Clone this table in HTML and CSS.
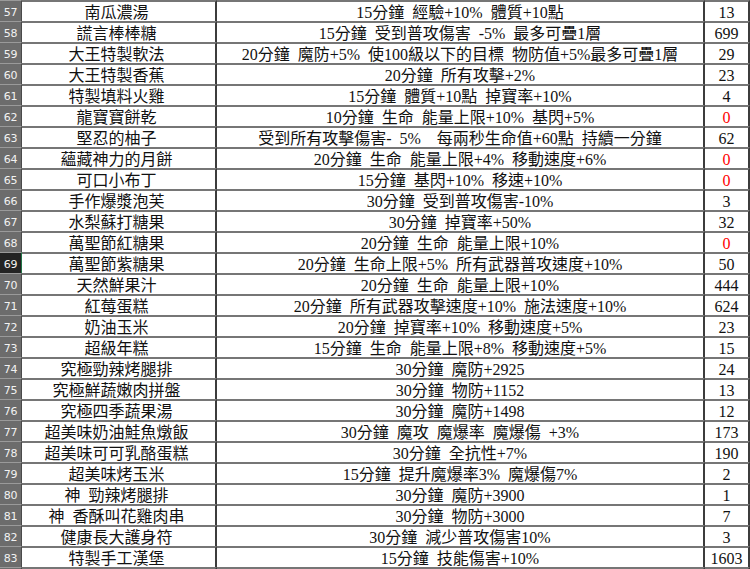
FILE: index.html
```html
<!DOCTYPE html>
<html lang="zh-Hant">
<head>
<meta charset="utf-8">
<title>料理清單</title>
<link rel="stylesheet" href="styles.css">
</head>
<body>
<div class="sheet">
  <div class="row"><div class="hd">57</div><div class="c name">南瓜濃湯</div><div class="c desc">15分鐘 經驗+10% 體質+10點</div><div class="c num">13</div></div>
  <div class="row"><div class="hd">58</div><div class="c name">謊言棒棒糖</div><div class="c desc">15分鐘 受到普攻傷害 -5% 最多可疊1層</div><div class="c num">699</div></div>
  <div class="row"><div class="hd">59</div><div class="c name">大王特製軟法</div><div class="c desc">20分鐘 魔防+5% 使100級以下的目標 物防值+5%最多可疊1層</div><div class="c num">29</div></div>
  <div class="row"><div class="hd">60</div><div class="c name">大王特製香蕉</div><div class="c desc">20分鐘 所有攻擊+2%</div><div class="c num">23</div></div>
  <div class="row"><div class="hd">61</div><div class="c name">特製填料火雞</div><div class="c desc">15分鐘 體質+10點 掉寶率+10%</div><div class="c num">4</div></div>
  <div class="row"><div class="hd">62</div><div class="c name">龍寶寶餅乾</div><div class="c desc">10分鐘 生命 能量上限+10% 基閃+5%</div><div class="c num zero">0</div></div>
  <div class="row"><div class="hd">63</div><div class="c name">堅忍的柚子</div><div class="c desc">受到所有攻擊傷害- 5%  每兩秒生命值+60點 持續一分鐘</div><div class="c num">62</div></div>
  <div class="row"><div class="hd">64</div><div class="c name">蘊藏神力的月餅</div><div class="c desc">20分鐘 生命 能量上限+4% 移動速度+6%</div><div class="c num zero">0</div></div>
  <div class="row"><div class="hd">65</div><div class="c name">可口小布丁</div><div class="c desc">15分鐘 基閃+10% 移速+10%</div><div class="c num zero">0</div></div>
  <div class="row"><div class="hd">66</div><div class="c name">手作爆漿泡芙</div><div class="c desc">30分鐘 受到普攻傷害-10%</div><div class="c num">3</div></div>
  <div class="row"><div class="hd">67</div><div class="c name">水梨蘇打糖果</div><div class="c desc">30分鐘 掉寶率+50%</div><div class="c num">32</div></div>
  <div class="row"><div class="hd">68</div><div class="c name">萬聖節紅糖果</div><div class="c desc">20分鐘 生命 能量上限+10%</div><div class="c num zero">0</div></div>
  <div class="row"><div class="hd active">69</div><div class="c name">萬聖節紫糖果</div><div class="c desc">20分鐘 生命上限+5% 所有武器普攻速度+10%</div><div class="c num">50</div></div>
  <div class="row"><div class="hd">70</div><div class="c name">天然鮮果汁</div><div class="c desc">20分鐘 生命 能量上限+10%</div><div class="c num">444</div></div>
  <div class="row"><div class="hd">71</div><div class="c name">紅莓蛋糕</div><div class="c desc">20分鐘 所有武器攻擊速度+10% 施法速度+10%</div><div class="c num">624</div></div>
  <div class="row"><div class="hd">72</div><div class="c name">奶油玉米</div><div class="c desc">20分鐘 掉寶率+10% 移動速度+5%</div><div class="c num">23</div></div>
  <div class="row"><div class="hd">73</div><div class="c name">超級年糕</div><div class="c desc">15分鐘 生命 能量上限+8% 移動速度+5%</div><div class="c num">15</div></div>
  <div class="row"><div class="hd">74</div><div class="c name">究極勁辣烤腿排</div><div class="c desc">30分鐘 魔防+2925</div><div class="c num">24</div></div>
  <div class="row"><div class="hd">75</div><div class="c name">究極鮮蔬嫩肉拼盤</div><div class="c desc">30分鐘 物防+1152</div><div class="c num">13</div></div>
  <div class="row"><div class="hd">76</div><div class="c name">究極四季蔬果湯</div><div class="c desc">30分鐘 魔防+1498</div><div class="c num">12</div></div>
  <div class="row"><div class="hd">77</div><div class="c name">超美味奶油鮭魚燉飯</div><div class="c desc">30分鐘 魔攻 魔爆率 魔爆傷 +3%</div><div class="c num">173</div></div>
  <div class="row"><div class="hd">78</div><div class="c name">超美味可可乳酪蛋糕</div><div class="c desc">30分鐘 全抗性+7%</div><div class="c num">190</div></div>
  <div class="row"><div class="hd">79</div><div class="c name">超美味烤玉米</div><div class="c desc">15分鐘 提升魔爆率3% 魔爆傷7%</div><div class="c num">2</div></div>
  <div class="row"><div class="hd">80</div><div class="c name">神 勁辣烤腿排</div><div class="c desc">30分鐘 魔防+3900</div><div class="c num">1</div></div>
  <div class="row"><div class="hd">81</div><div class="c name">神 香酥叫花雞肉串</div><div class="c desc">30分鐘 物防+3000</div><div class="c num">7</div></div>
  <div class="row"><div class="hd">82</div><div class="c name">健康長大護身符</div><div class="c desc">30分鐘 減少普攻傷害10%</div><div class="c num">3</div></div>
  <div class="row"><div class="hd">83</div><div class="c name">特製手工漢堡</div><div class="c desc">15分鐘 技能傷害+10%</div><div class="c num">1603</div></div>
  <div class="row"><div class="hd"></div><div class="c name"></div><div class="c desc"></div><div class="c num"></div></div>
</div>
</body>
</html>
```

FILE: styles.css
```css
html, body {
  margin: 0;
  padding: 0;
  background: #ffffff;
  overflow: hidden;
}

.sheet {
  width: 750px;
  height: 569px;
  overflow: hidden;
}

.row {
  display: grid;
  grid-template-columns: 22px 195px 488px 45px;
  height: 21px;
}

.hd {
  background: #6c6c6c;
  color: #f2f2f2;
  font-family: "DejaVu Sans", sans-serif;
  font-size: 11px;
  border-top: 1px solid #9a9a9a;
  border-right: 1px solid #4a4a4a;
  display: flex;
  align-items: center;
  justify-content: center;
  padding-top: 2px;
  letter-spacing: -0.3px;
}

.hd.active {
  background: #232323;
  border-right-color: #217346;
}

.c {
  border-top: 2px solid #767676;
  border-right: 2px solid #3c3c3c;
  display: flex;
  align-items: center;
  justify-content: center;
  font-family: "Liberation Serif", "Noto Sans CJK TC", serif;
  font-size: 16px;
  color: #111111;
  white-space: pre;
  word-spacing: 0.25em;
  padding-top: 2px;
  overflow: hidden;
  line-height: 1;
}

.name {
  letter-spacing: 0;
  padding-right: 4px;
}

.num.zero {
  color: #ff0000;
}
```
